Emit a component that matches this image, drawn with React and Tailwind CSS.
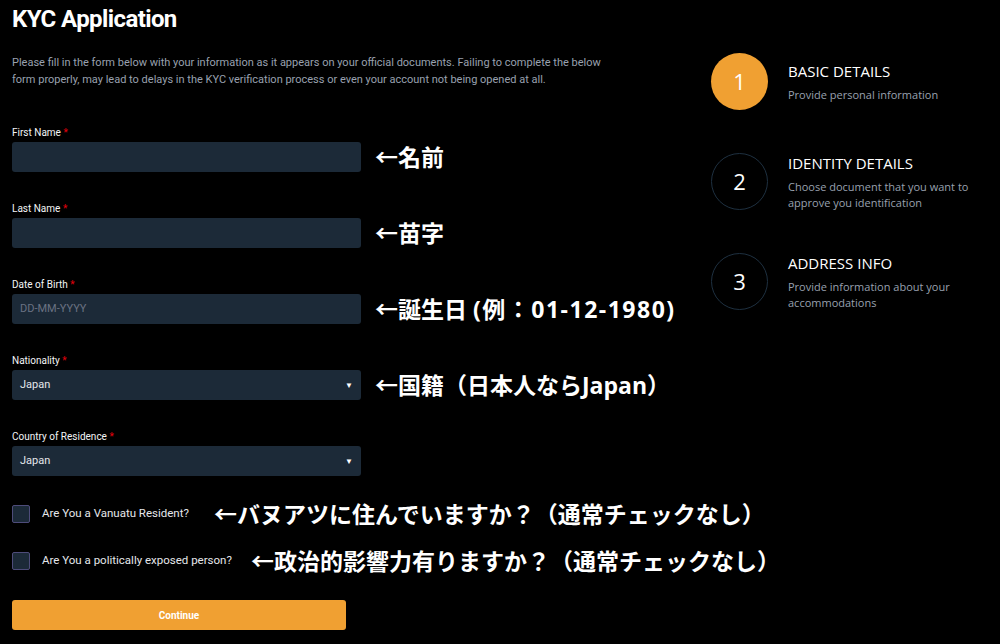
import React from 'react';

const cond = { fontFamily: '"Liberation Sans Narrow", Roboto, "Open Sans", sans-serif' };
const jp = { fontFamily: '"Open Sans", "Noto Sans CJK JP", "Noto Sans", sans-serif' };
const os = { fontFamily: '"Open Sans", sans-serif' };

const Note = ({ children, className = '' }) => (
  <span className={`text-[23px] font-bold text-white leading-none whitespace-nowrap ${className}`} style={jp}>
    {children}
  </span>
);

const Field = ({ label, value, placeholder, select, note }) => (
  <div className="flex flex-col">
    <label className="text-[10px] leading-[12px] text-gray-100" style={cond}>
      {label} <span className="text-red-600">*</span>
    </label>
    <div className="flex items-center mt-[3px]">
      <div className="w-[349px] h-[30px] bg-[#1c2a38] rounded-[3px] flex items-center justify-between px-[8px] shrink-0">
        <span className={`text-[11px] ${placeholder ? 'text-gray-500' : 'text-gray-200'}`} style={cond}>
          {value || placeholder}
        </span>
        {select && <span className="text-[8px] text-white">▼</span>}
      </div>
      {note && <Note className="ml-[14px]">{note}</Note>}
    </div>
  </div>
);

const Check = ({ label, note, gap }) => (
  <div className="flex items-center h-[22px]">
    <div className="w-[18px] h-[18px] bg-[#1c2a38] border border-[#4e4c7a] rounded-[2px] shrink-0" />
    <span className="ml-[12px] text-[11.5px] text-gray-200 whitespace-nowrap" style={cond}>{label}</span>
    <Note className={gap}>{note}</Note>
  </div>
);

const Step = ({ n, title, desc, active }) => (
  <div className="flex items-start h-[100px]">
    <div
      className={`w-[57px] h-[57px] rounded-full flex items-center justify-center shrink-0 text-[22px] text-white ${
        active ? 'bg-[#f0a032]' : 'border border-[#1e3040]'
      }`}
      style={os}
    >
      {n}
    </div>
    <div className="ml-[20px] h-[57px] flex flex-col justify-center" style={os}>
      <div className="text-[15px] leading-[20px] text-white">{title}</div>
      <div className="mt-[6px] text-[11px] leading-[16px] text-gray-400 w-[190px]">{desc}</div>
    </div>
  </div>
);

export default function App() {
  return (
    <div className="w-[1000px] h-[644px] bg-black flex overflow-hidden">
      <div className="w-[699px] pl-[12px] shrink-0">
        <h1 className="text-[24px] font-bold text-white leading-[38px] tracking-tight" style={cond}>
          KYC Application
        </h1>
        <p className="mt-[16px] w-[600px] text-[11px] leading-[17px] text-gray-400" style={cond}>
          Please fill in the form below with your information as it appears on your official documents. Failing to complete the below form properly, may lead to delays in the KYC verification process or even your account not being opened at all.
        </p>
        <div className="mt-[39px] flex flex-col gap-[31px]">
          <Field label="First Name" note="←名前" />
          <Field label="Last Name" note="←苗字" />
          <Field
            label="Date of Birth"
            placeholder="DD-MM-YYYY"
            note={<>←誕生日 <span className="tracking-[1.5px]">(例：01-12-1980)</span></>}
          />
          <Field label="Nationality" value="Japan" select note="←国籍（日本人ならJapan）" />
          <Field label="Country of Residence" value="Japan" select />
        </div>
        <div className="mt-[27px] flex flex-col gap-[25px]">
          <Check label="Are You a Vanuatu Resident?" note="←バヌアツに住んでいますか？（通常チェックなし）" gap="ml-[25px]" />
          <Check label="Are You a politically exposed person?" note="←政治的影響力有りますか？（通常チェックなし）" gap="ml-[19px]" />
        </div>
        <button className="mt-[28px] w-[334px] h-[30px] bg-[#f0a032] rounded-[3px] text-[10px] font-bold text-white" style={cond}>
          Continue
        </button>
      </div>
      <div className="pt-[53px] pl-[12px] flex flex-col">
        <Step n="1" title="BASIC DETAILS" desc="Provide personal information" active />
        <Step n="2" title="IDENTITY DETAILS" desc="Choose document that you want to approve you identification" />
        <Step n="3" title="ADDRESS INFO" desc="Provide information about your accommodations" />
      </div>
    </div>
  );
}
